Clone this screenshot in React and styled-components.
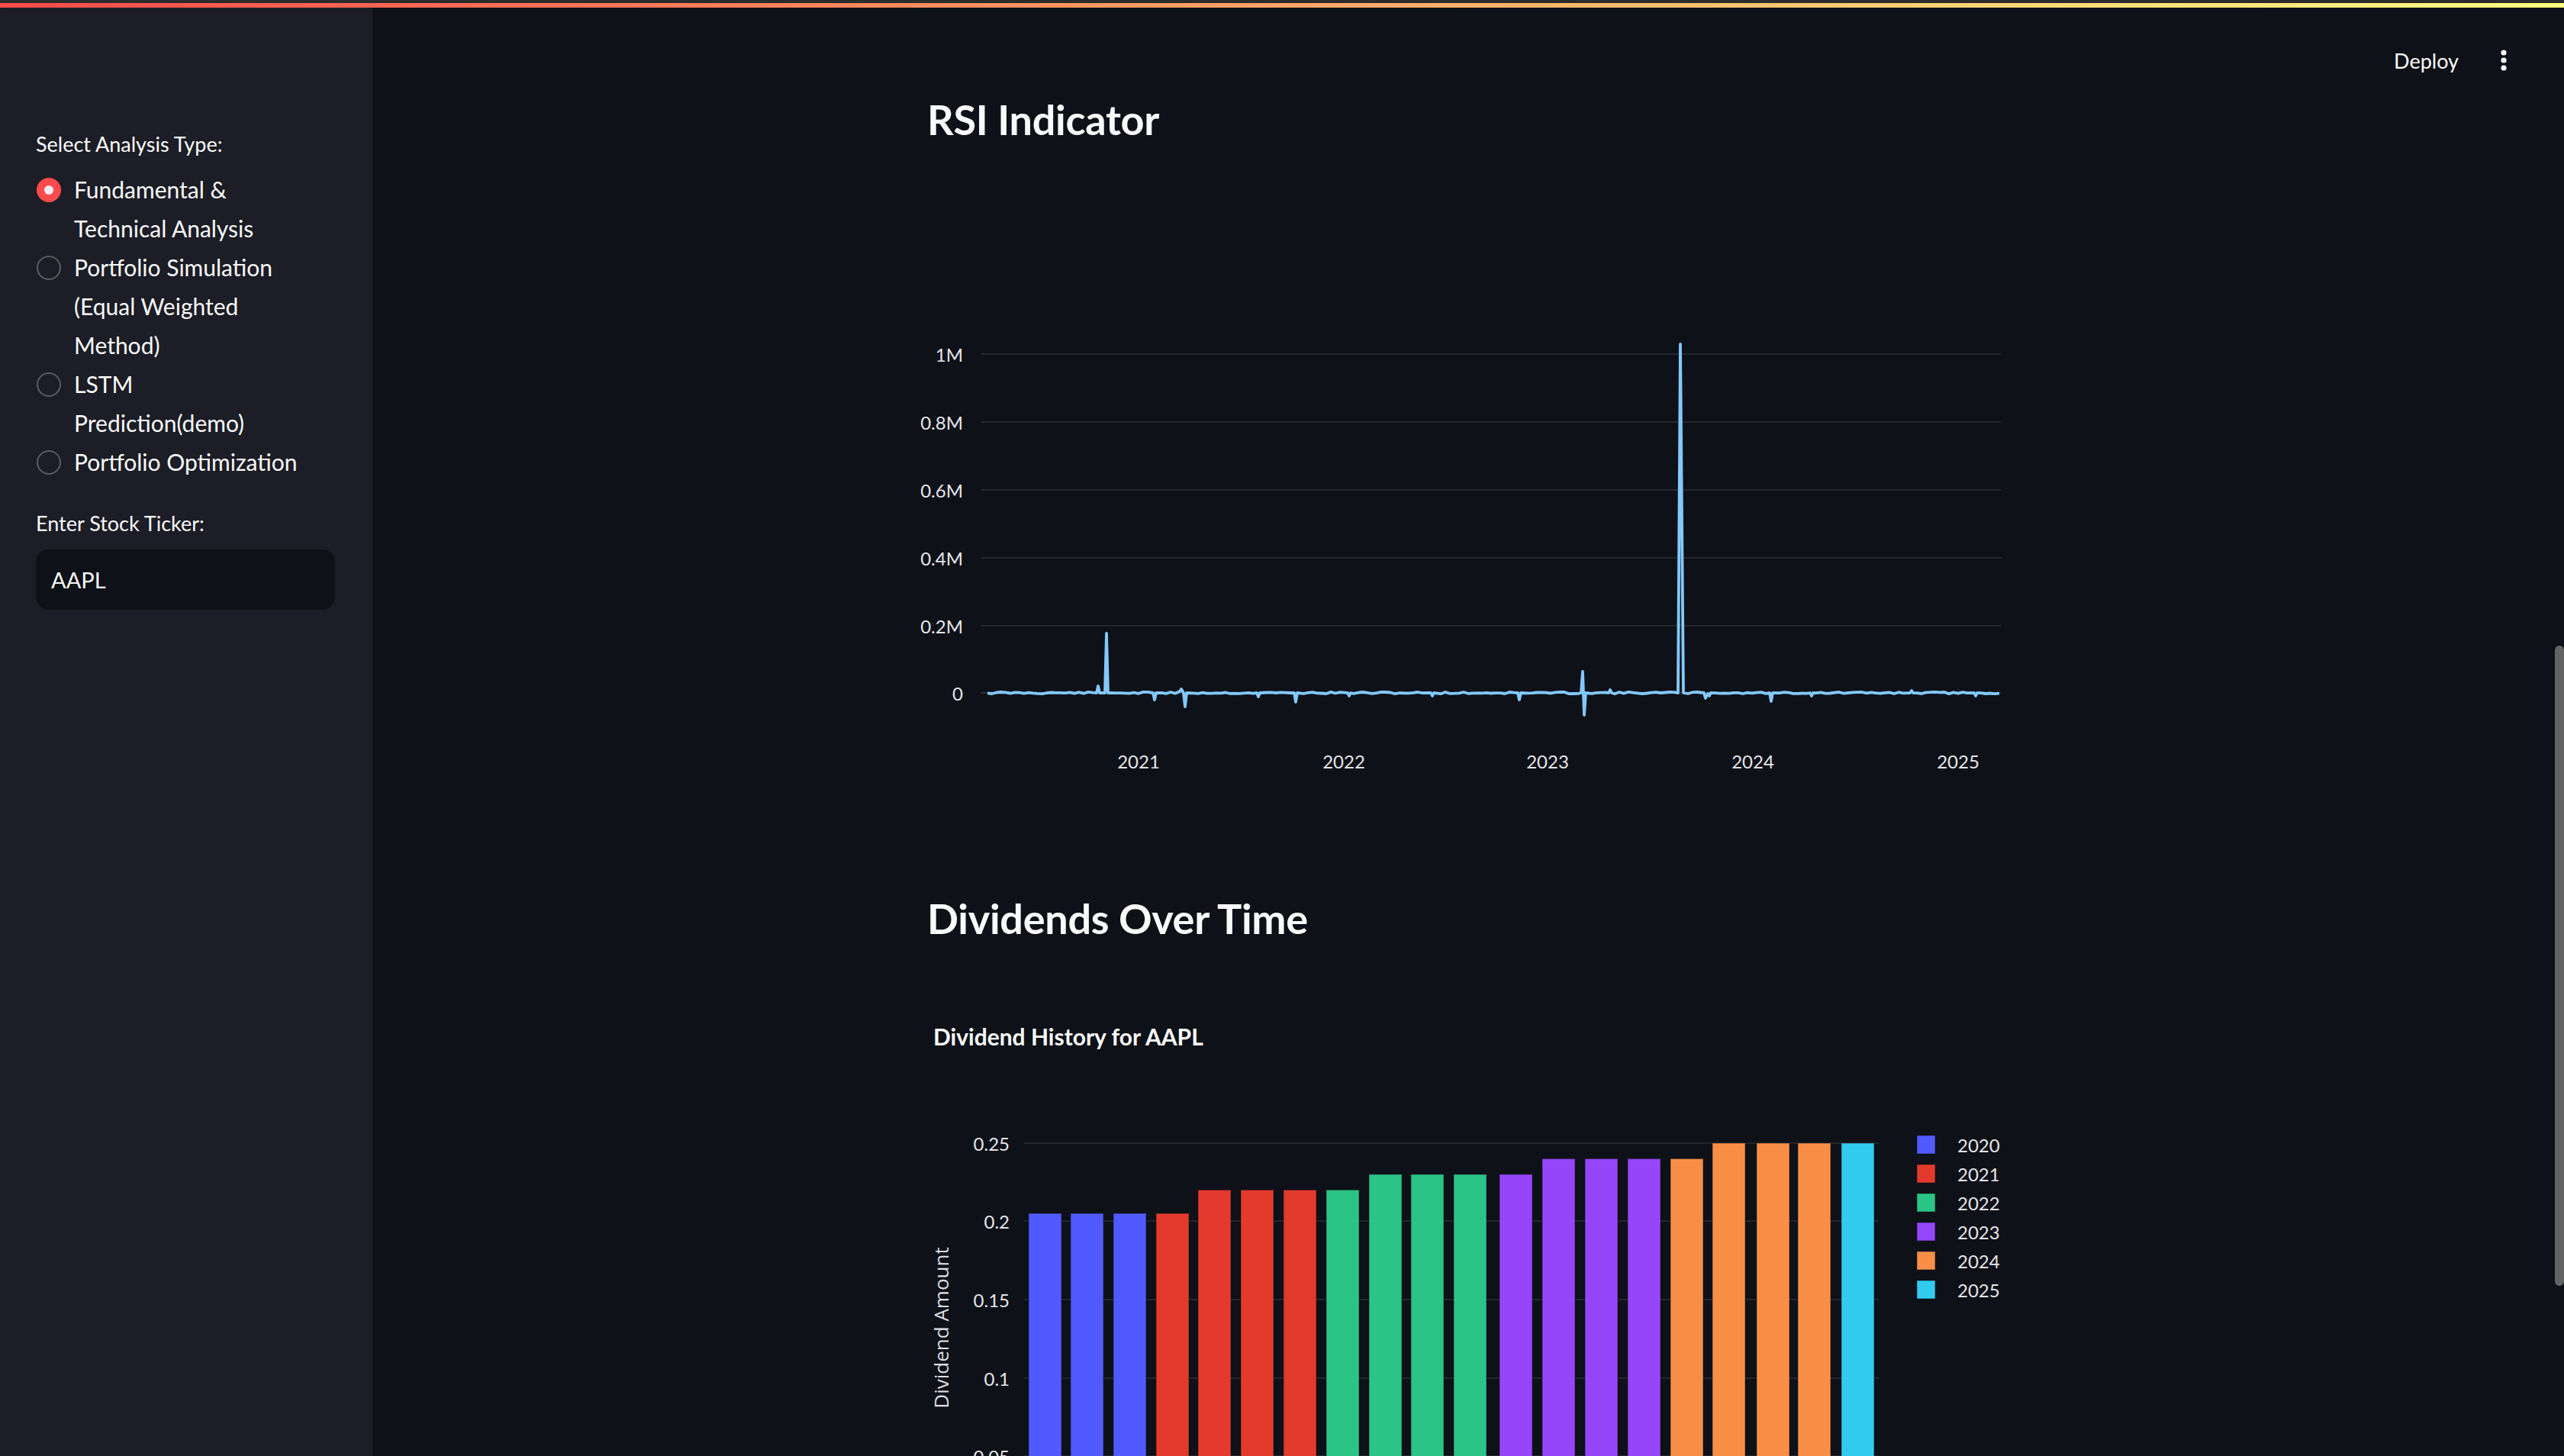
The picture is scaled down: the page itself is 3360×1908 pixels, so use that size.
import styled, { createGlobalStyle } from "styled-components";

const GlobalStyle = createGlobalStyle`
  html, body {
    margin: 0;
    padding: 0;
    background: #0e1117;
    overflow: hidden;
  }
  * {
    box-sizing: border-box;
  }
  body {
    font-family: Lato, "Noto Sans", sans-serif;
    color: #fafafa;
  }
`;

const OPTIONS = [
  { lines: ["Fundamental &", "Technical Analysis"], checked: true },
  { lines: ["Portfolio Simulation", "(Equal Weighted", "Method)"] },
  { lines: ["LSTM", "Prediction(demo)"] },
  { lines: ["Portfolio Optimization"] },
];

const Y_TICKS = [
  { label: "1M", y: 464 },
  { label: "0.8M", y: 553 },
  { label: "0.6M", y: 642 },
  { label: "0.4M", y: 731 },
  { label: "0.2M", y: 820 },
];

const X_TICKS = [
  { label: "2021", x: 1492 },
  { label: "2022", x: 1761 },
  { label: "2023", x: 2028 },
  { label: "2024", x: 2297 },
  { label: "2025", x: 2566 },
];

// spikes and dips of the series, in chart pixels
const EVENTS = [
  [1437, 908], [1439, 899], [1441, 908],
  [1448, 908], [1450, 830], [1452, 908],
  [1511, 908], [1513, 917], [1515, 908],
  [1546, 906], [1548, 903], [1551, 908], [1553, 926], [1555, 908],
  [1647, 908], [1649, 913], [1651, 908],
  [1696, 908], [1698, 920], [1700, 908],
  [1766, 908], [1768, 912], [1770, 908],
  [1875, 908], [1877, 912], [1879, 908],
  [1989, 908], [1991, 917], [1993, 908],
  [2072, 908], [2074, 880], [2076, 937], [2078, 908],
  [2108, 908], [2110, 904], [2112, 908],
  [2199, 908], [2202, 451], [2206, 908],
  [2233, 908], [2235, 915], [2238, 909], [2240, 912], [2242, 908],
  [2319, 908], [2321, 919], [2323, 908],
  [2372, 908], [2374, 912], [2376, 908],
  [2503, 908], [2505, 905], [2507, 908],
  [2587, 908], [2589, 912], [2591, 908],
];

function buildRsiPath() {
  let seed = 11;
  const rand = () => {
    seed = (seed * 9301 + 49297) % 233280;
    return seed / 233280;
  };
  const pts = [];
  for (let x = 1294; x <= 2622; x += 6) {
    const near = EVENTS.some(([ex]) => Math.abs(ex - x) < 4);
    if (!near) pts.push([x, 908 + (rand() - 0.5) * 2.4]);
  }
  const all = [...pts, ...EVENTS].sort((a, b) => a[0] - b[0]);
  return all.map(([x, y], i) => `${i ? "L" : "M"}${x} ${y.toFixed(1)}`).join(" ");
}

const RSI_PATH = buildRsiPath();

const COLORS = {
  2020: "#505aff",
  2021: "#e43a2e",
  2022: "#2bc487",
  2023: "#9646fa",
  2024: "#f98f47",
  2025: "#32cbf0",
};

const BARS = [
  [1348, 2020, 0.205], [1403, 2020, 0.205], [1459, 2020, 0.205],
  [1515, 2021, 0.205], [1570, 2021, 0.22], [1626, 2021, 0.22], [1682, 2021, 0.22],
  [1738, 2022, 0.22], [1794, 2022, 0.23], [1849, 2022, 0.23], [1905, 2022, 0.23],
  [1965, 2023, 0.23], [2021, 2023, 0.24], [2077, 2023, 0.24], [2133, 2023, 0.24],
  [2189, 2024, 0.24], [2244, 2024, 0.25], [2302, 2024, 0.25], [2356, 2024, 0.25],
  [2413, 2025, 0.25],
];

const valueY = (v) => 1498 + (0.25 - v) * 2046;

const DIV_TICKS = [
  { label: "0.25", y: 1498 },
  { label: "0.2", y: 1600 },
  { label: "0.15", y: 1703 },
  { label: "0.1", y: 1806 },
  { label: "0.05", y: 1908 },
];

export default function App() {
  return (
    <>
      <GlobalStyle />
      <Frame>
        <ChromeStrip />
        <Decoration />
        <Body>
          <Sidebar>
            <FieldLabel>Select Analysis Type:</FieldLabel>
            <RadioGroup>
              {OPTIONS.map((opt) => (
                <RadioOption key={opt.lines[0]}>
                  <RadioDot $checked={opt.checked} />
                  <OptionText>
                    {opt.lines.map((line) => (
                      <span key={line}>{line}</span>
                    ))}
                  </OptionText>
                </RadioOption>
              ))}
            </RadioGroup>
            <TickerField>
              <FieldLabel>Enter Stock Ticker:</FieldLabel>
              <TickerInput defaultValue="AAPL" />
            </TickerField>
          </Sidebar>

          <Main>
            <Header>
              <DeployButton>Deploy</DeployButton>
              <MenuButton aria-label="menu">
                <svg width="14" height="34" viewBox="0 0 14 34">
                  <circle cx="7" cy="7" r="3.6" fill="#fafafa" />
                  <circle cx="7" cy="17" r="3.6" fill="#fafafa" />
                  <circle cx="7" cy="27" r="3.6" fill="#fafafa" />
                </svg>
              </MenuButton>
            </Header>

            <Content>
              <Heading>RSI Indicator</Heading>
              <ChartSvg
                $top={11}
                width="1509"
                height="850"
                viewBox="1215 200 1509 850"
              >
                {Y_TICKS.map((t) => (
                  <g key={t.label}>
                    <line x1="1285" x2="2622" y1={t.y} y2={t.y} stroke="#25262d" strokeWidth="2" />
                    <text x="1262" y={t.y} textAnchor="end" dominantBaseline="central">
                      {t.label}
                    </text>
                  </g>
                ))}
                <line x1="1285" x2="2622" y1="908" y2="908" stroke="#30313a" strokeWidth="2" />
                <text x="1262" y="908" textAnchor="end" dominantBaseline="central">
                  0
                </text>
                {X_TICKS.map((t) => (
                  <text key={t.label} x={t.x} y="997" textAnchor="middle" dominantBaseline="central">
                    {t.label}
                  </text>
                ))}
                <path d={RSI_PATH} fill="none" stroke="#83c9ff" strokeWidth="3.8" strokeLinejoin="round" />
              </ChartSvg>

              <Heading $gap={122}>Dividends Over Time</Heading>
              <ChartSvg
                $top={10}
                width="1509"
                height="662"
                viewBox="1215 1246 1509 662"
              >
                <ChartTitle x="1223" y="1370">
                  Dividend History for AAPL
                </ChartTitle>
                {DIV_TICKS.map((t) => (
                  <g key={t.label}>
                    <line x1="1342" x2="2462" y1={t.y} y2={t.y} stroke="#25262d" strokeWidth="2" />
                    <text x="1323" y={t.y} textAnchor="end" dominantBaseline="central">
                      {t.label}
                    </text>
                  </g>
                ))}
                {BARS.map(([x, year, v]) => (
                  <rect
                    key={x}
                    x={x}
                    y={valueY(v)}
                    width="43"
                    height={2000 - valueY(v)}
                    fill={COLORS[year]}
                    stroke="rgba(14,17,23,0.35)"
                    strokeWidth="1.5"
                  />
                ))}
                <AxisTitle x="1233" y="1740" transform="rotate(-90 1233 1740)">
                  Dividend Amount
                </AxisTitle>
                {Object.keys(COLORS).map((year, i) => (
                  <g key={year}>
                    <rect
                      x="2512"
                      y={1488 + i * 38}
                      width="24"
                      height="24"
                      fill={COLORS[year]}
                      stroke="rgba(14,17,23,0.35)"
                      strokeWidth="1.5"
                    />
                    <text x="2565" y={1500 + i * 38} dominantBaseline="central">
                      {year}
                    </text>
                  </g>
                ))}
              </ChartSvg>
            </Content>

            <ScrollThumb />
          </Main>
        </Body>
      </Frame>
    </>
  );
}

const Frame = styled.div`
  width: 3360px;
  height: 1908px;
  display: flex;
  flex-direction: column;
  overflow: hidden;
  background: #0e1117;
`;

const ChromeStrip = styled.div`
  height: 4px;
  background: #2b2b2b;
`;

const Decoration = styled.div`
  height: 6px;
  background: linear-gradient(90deg, #ff4b4b, #fffd80);
`;

const Body = styled.div`
  flex: 1;
  display: flex;
  min-height: 0;
`;

const Sidebar = styled.aside`
  width: 488px;
  flex-shrink: 0;
  background: #1c1d26;
  padding: 158px 49px 0 47px;
  display: flex;
  flex-direction: column;
`;

const FieldLabel = styled.div`
  font-size: 27px;
  line-height: 42px;
  color: #fafafa;
  margin-bottom: 13px;
`;

const RadioGroup = styled.div`
  display: flex;
  flex-direction: column;
`;

const RadioOption = styled.label`
  display: flex;
  align-items: flex-start;
  gap: 17px;
  font-size: 30px;
  line-height: 51px;
  color: #fafafa;
`;

const RadioDot = styled.span`
  width: 32px;
  height: 32px;
  margin: 9.5px 0 0 1px;
  flex-shrink: 0;
  border-radius: 50%;
  display: flex;
  align-items: center;
  justify-content: center;
  background: ${(p) => (p.$checked ? "#ff4b4b" : "transparent")};
  border: ${(p) => (p.$checked ? "none" : "2.5px solid #5b5c63")};

  &::after {
    content: "";
    display: ${(p) => (p.$checked ? "block" : "none")};
    width: 12px;
    height: 12px;
    border-radius: 50%;
    background: #eceef3;
  }
`;

const OptionText = styled.div`
  display: flex;
  flex-direction: column;
  white-space: nowrap;
`;

const TickerField = styled.div`
  margin-top: 34px;
  display: flex;
  flex-direction: column;
`;

const TickerInput = styled.input`
  height: 79px;
  width: 100%;
  border: none;
  outline: none;
  border-radius: 17px;
  background: #0e1117;
  color: #fafafa;
  padding: 0 20px;
  font-family: Lato, "Noto Sans", sans-serif;
  font-size: 29px;
`;

const Main = styled.main`
  flex: 1;
  position: relative;
  overflow: hidden;
`;

const Header = styled.header`
  position: absolute;
  top: 0;
  right: 0;
  height: 138px;
  display: flex;
  align-items: center;
  gap: 52px;
  padding-right: 72px;
`;

const DeployButton = styled.button`
  background: none;
  border: none;
  padding: 0;
  color: #fafafa;
  font-family: Lato, "Noto Sans", sans-serif;
  font-size: 27px;
`;

const MenuButton = styled.button`
  background: none;
  border: none;
  padding: 0;
  display: flex;
`;

const Content = styled.section`
  margin-left: 727px;
  width: 1509px;
  padding-top: 115px;
  display: flex;
  flex-direction: column;
`;

const Heading = styled.h2`
  margin: ${(p) => p.$gap || 0}px 0 0;
  font-size: 54px;
  line-height: 64px;
  font-weight: 700;
  letter-spacing: -0.3px;
  color: #fafafa;
`;

const ChartSvg = styled.svg`
  display: block;
  flex-shrink: 0;
  overflow: visible;
  margin-top: ${(p) => p.$top}px;

  text {
    font-family: Lato, "Noto Sans", sans-serif;
    font-size: 24px;
    fill: #e6e6ea;
  }
`;

const ChartTitle = styled.text`
  && {
    font-size: 30px;
    font-weight: 700;
    fill: #fafafa;
  }
`;

const AxisTitle = styled.text`
  && {
    font-family: "Open Sans", sans-serif;
    font-size: 26px;
    fill: #dedee2;
    text-anchor: middle;
    dominant-baseline: central;
  }
`;

const ScrollThumb = styled.div`
  position: absolute;
  right: 0;
  top: 836px;
  width: 12px;
  height: 839px;
  border-radius: 6px;
  background: #636363;
`;
